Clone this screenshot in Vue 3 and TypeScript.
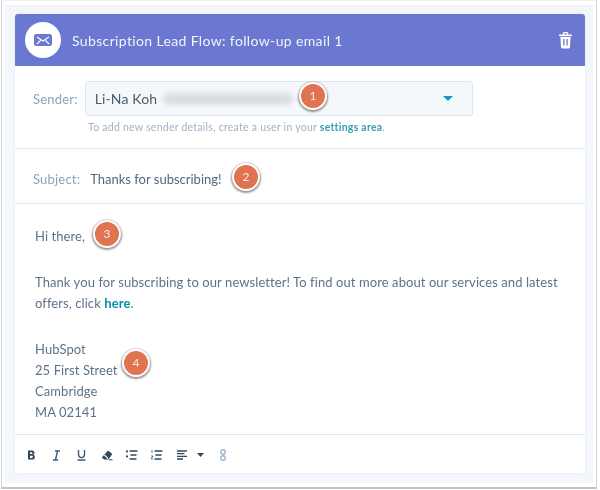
<script setup lang="ts">
const tools = ['bold', 'italic', 'underline', 'eraser', 'ul', 'ol', 'align', 'caret', 'link']
// Marker centres, measured from the top-left corner of the stage.
const markers = [
  { n: 1, x: 308, y: 91 },
  { n: 2, x: 241, y: 172 },
  { n: 3, x: 102, y: 229 },
  { n: 4, x: 131, y: 358 },
]
</script>

<template>
  <div class="frame">
    <div class="stage">
      <section class="card">
        <header class="head">
          <span class="badge">
            <svg width="18" height="12" viewBox="0 0 18 12">
              <rect width="18" height="12" rx="2.5" fill="#6a78d1" />
              <path d="M3 3 9 7l6-4M3 10l3.6-3.6M15 10l-3.6-3.6" fill="none" stroke="#fff" stroke-width="1.2" />
            </svg>
          </span>
          <h1 class="title">Subscription Lead Flow: follow-up email 1</h1>
          <svg class="trash" width="13" height="17" viewBox="0 0 13 17">
            <path d="M4.5 2.4V1.4C4.5.8 5 .6 5.4.6h2.2c.5 0 .9.3.9.8v1M.6 3.2h11.8" fill="none" stroke="#fff" stroke-width="1.4" stroke-linecap="round" />
            <path d="M1.4 4.8h10.2l-.6 10.2c0 .8-.6 1.4-1.4 1.4H3.4c-.8 0-1.4-.6-1.4-1.4z" fill="#fff" />
            <path d="M4.9 7v6.6M8.1 7v6.6" stroke="#6a78d1" stroke-width="1.3" />
          </svg>
        </header>

        <div class="sender">
          <div class="sender-row">
            <span class="label">Sender:</span>
            <div class="select">
              <span class="name">Li-Na Koh</span>
              <span class="smudge"></span>
              <span class="caret"></span>
            </div>
          </div>
          <p class="hint">To add new sender details, create a user in your <a class="link">settings area</a>.</p>
        </div>

        <div class="subject">
          <span class="label">Subject:</span>
          <span class="subject-text">Thanks for subscribing!</span>
        </div>

        <div class="body">
          <p class="hi">Hi there,</p>
          <p class="para">Thank you for subscribing to our newsletter! To find out more about our services and latest offers, click <a class="link">here</a>.</p>
          <p class="address">HubSpot<br />25 First Street<br />Cambridge<br />MA 02141</p>
        </div>

        <div class="toolbar">
          <span v-for="t in tools" :key="t" class="tool" :class="'tool-' + t">
            <svg v-if="t === 'bold'" width="11" height="11" viewBox="0 0 11 11"><path d="M2 .6h3.9c1.6 0 2.5.8 2.5 2.2 0 .9-.4 1.6-1.2 1.9 1.1.3 1.7 1.1 1.7 2.2 0 1.6-1.1 2.7-2.8 2.7H2zM4 2.3v1.8h1.6c.6 0 .9-.3.9-.9s-.3-.9-.9-.9zm0 3.4v2.2h1.8c.7 0 1.1-.4 1.1-1.1s-.4-1.1-1.1-1.1z" fill="#33475b" /></svg>
            <svg v-else-if="t === 'italic'" width="11" height="11" viewBox="0 0 11 11"><path d="M4 1h5M2 10h5M6.5 1l-2 9" fill="none" stroke="#425b76" stroke-width="1.4" /></svg>
            <svg v-else-if="t === 'underline'" width="11" height="12" viewBox="0 0 11 12"><path d="M2.5 1v4.6c0 2 1.2 3 3 3s3-1 3-3V1M1.5 11h8" fill="none" stroke="#425b76" stroke-width="1.4" /></svg>
            <svg v-else-if="t === 'eraser'" width="12" height="11" viewBox="0 0 12 11"><path d="M7 .6 11.4 4 7.4 9.4H3.2L.8 7.4z" fill="#33475b" /><path d="M3.4 4.8 7 8.6" stroke="#fff" stroke-width="1.2" /><path d="M8 9.8h3.5" stroke="#33475b" stroke-width="1" /></svg>
            <svg v-else-if="t === 'ul'" width="12" height="10" viewBox="0 0 12 10"><path d="M3.5 1h8M4.5 5h6M3.5 9h7" stroke="#33475b" stroke-width="1.3" /><circle cx="1" cy="1.4" r="1.1" fill="#33475b" /><circle cx="1" cy="6.4" r="1.1" fill="#33475b" /></svg>
            <svg v-else-if="t === 'ol'" width="12" height="10" viewBox="0 0 12 10"><path d="M3.5 1h8M4.5 5h6M3.5 9h7" stroke="#33475b" stroke-width="1.3" /><path d="M1 0v3M0 6h2L.2 9H2" fill="none" stroke="#33475b" stroke-width=".8" /></svg>
            <svg v-else-if="t === 'align'" width="10" height="10" viewBox="0 0 10 10"><path d="M0 1h10M0 3.7h7.5M0 6.4h10M0 9h6" stroke="#33475b" stroke-width="1.3" /></svg>
            <svg v-else-if="t === 'caret'" width="7" height="4" viewBox="0 0 7 4"><path d="M0 0h7L3.5 4z" fill="#33475b" /></svg>
            <svg v-else width="6" height="12" viewBox="0 0 6 12"><rect x=".7" y=".7" width="4.6" height="4.6" rx="2.3" fill="none" stroke="#9fb5cb" stroke-width="1.4" /><rect x=".7" y="6.7" width="4.6" height="4.6" rx="2.3" fill="none" stroke="#9fb5cb" stroke-width="1.4" /></svg>
          </span>
        </div>
      </section>

      <span v-for="m in markers" :key="m.n" class="marker" :style="{ left: m.x + 'px', top: m.y + 'px' }">{{ m.n }}</span>
    </div>
  </div>
</template>

<style>
html, body { margin: 0; background: #fff; }
</style>

<style scoped>
.frame {
  width: 596px;
  height: 489px;
  margin: 0 3px 0 1px;
  box-sizing: border-box;
  padding: 4px 3px 4px 3px;
  border-left: 1px solid #d2d2d2;
  border-right: 1px solid #d2d2d2;
  border-bottom: 2px solid #c4c4c4;
  border-top: 1px solid #efefef;
  background: #fff;
  font-family: Lato, "Open Sans", sans-serif;
  overflow: hidden;
}
.stage {
  position: relative;
  height: 100%;
  box-sizing: border-box;
  padding: 9px 8px 0 10px;
  background: #f3f7fb;
  filter: blur(.3px);
}
.card {
  width: 570px;
  height: 459px;
  display: flex;
  flex-direction: column;
  background: #fff;
  border-radius: 3px;
  box-shadow: 0 0 2px rgba(203, 214, 226, .6);
  overflow: hidden;
}
.head {
  height: 52px;
  flex: none;
  display: flex;
  align-items: center;
  padding: 0 13px 0 10px;
  background: #6a78d1;
  color: #fff;
}
.badge {
  width: 36px;
  height: 36px;
  border-radius: 50%;
  background: #fff;
  display: flex;
  align-items: center;
  justify-content: center;
  flex: none;
}
.title {
  flex: 1;
  margin: 0 0 0 11px;
  font-size: 14px;
  font-weight: 400;
  letter-spacing: .36px;
  color: #f2f4fb;
}
.sender {
  height: 83px;
  flex: none;
  box-sizing: border-box;
  padding-top: 15px;
  border-bottom: 1px solid #dfe6ee;
}
.sender-row { display: flex; align-items: center; padding-left: 18px; }
.label { font-size: 13px; letter-spacing: .2px; color: #8ea3ba; }
.select {
  width: 388px;
  height: 35px;
  box-sizing: border-box;
  margin-left: 7px;
  padding: 0 19px 0 9px;
  display: flex;
  align-items: center;
  background: #f5f8fa;
  border: 1px solid #dfe5ec;
  border-radius: 3px;
}
.name { font-size: 14px; letter-spacing: .15px; color: #4b5c6e; }
.smudge {
  width: 130px;
  height: 10px;
  margin-left: 6px;
  border-radius: 5px;
  background: #d3d8de;
  filter: blur(3px);
}
.caret {
  margin-left: auto;
  width: 0;
  height: 0;
  border-left: 5px solid transparent;
  border-right: 5px solid transparent;
  border-top: 5px solid #00a4bd;
}
.hint {
  margin: 5px 0 0 73px;
  font-size: 10.5px;
  letter-spacing: .25px;
  color: #9fb2c6;
}
.link { color: #0091ae; font-weight: 700; }
.hint .link { color: #3a9db3; }
.subject {
  height: 55px;
  flex: none;
  box-sizing: border-box;
  padding: 5px 0 0 18px;
  display: flex;
  align-items: center;
  border-bottom: 1px solid #dfe6ee;
}
.subject-text { margin-left: 10px; font-size: 13px; color: #55677a; }
.body {
  flex: 1;
  box-sizing: border-box;
  padding: 22px 20px 0 20px;
  font-size: 13px;
  line-height: 21px;
  letter-spacing: .08px;
  color: #5f7287;
  border-bottom: 1px solid #dfe6ee;
}
.body p { margin: 0; }
.body .para { margin-top: 25px; }
.body .address { margin-top: 25px; }
.toolbar {
  height: 38px;
  flex: none;
  box-sizing: border-box;
  padding: 2px 0 0 4px;
  display: flex;
  align-items: center;
}
.tool { width: 25px; display: flex; justify-content: center; align-items: center; flex: none; }
.tool-caret { width: 15px; margin-left: -1px; margin-right: 2px; }
.marker {
  position: absolute;
  width: 28px;
  height: 28px;
  margin: -14px 0 0 -14px;
  box-sizing: border-box;
  border: 2px solid #fff;
  border-radius: 50%;
  background: #e07350;
  color: #fbe9e2;
  font-size: 12px;
  line-height: 24px;
  text-align: center;
  box-shadow: 0 1px 2px 1px rgba(60, 60, 60, .55);
}
</style>
